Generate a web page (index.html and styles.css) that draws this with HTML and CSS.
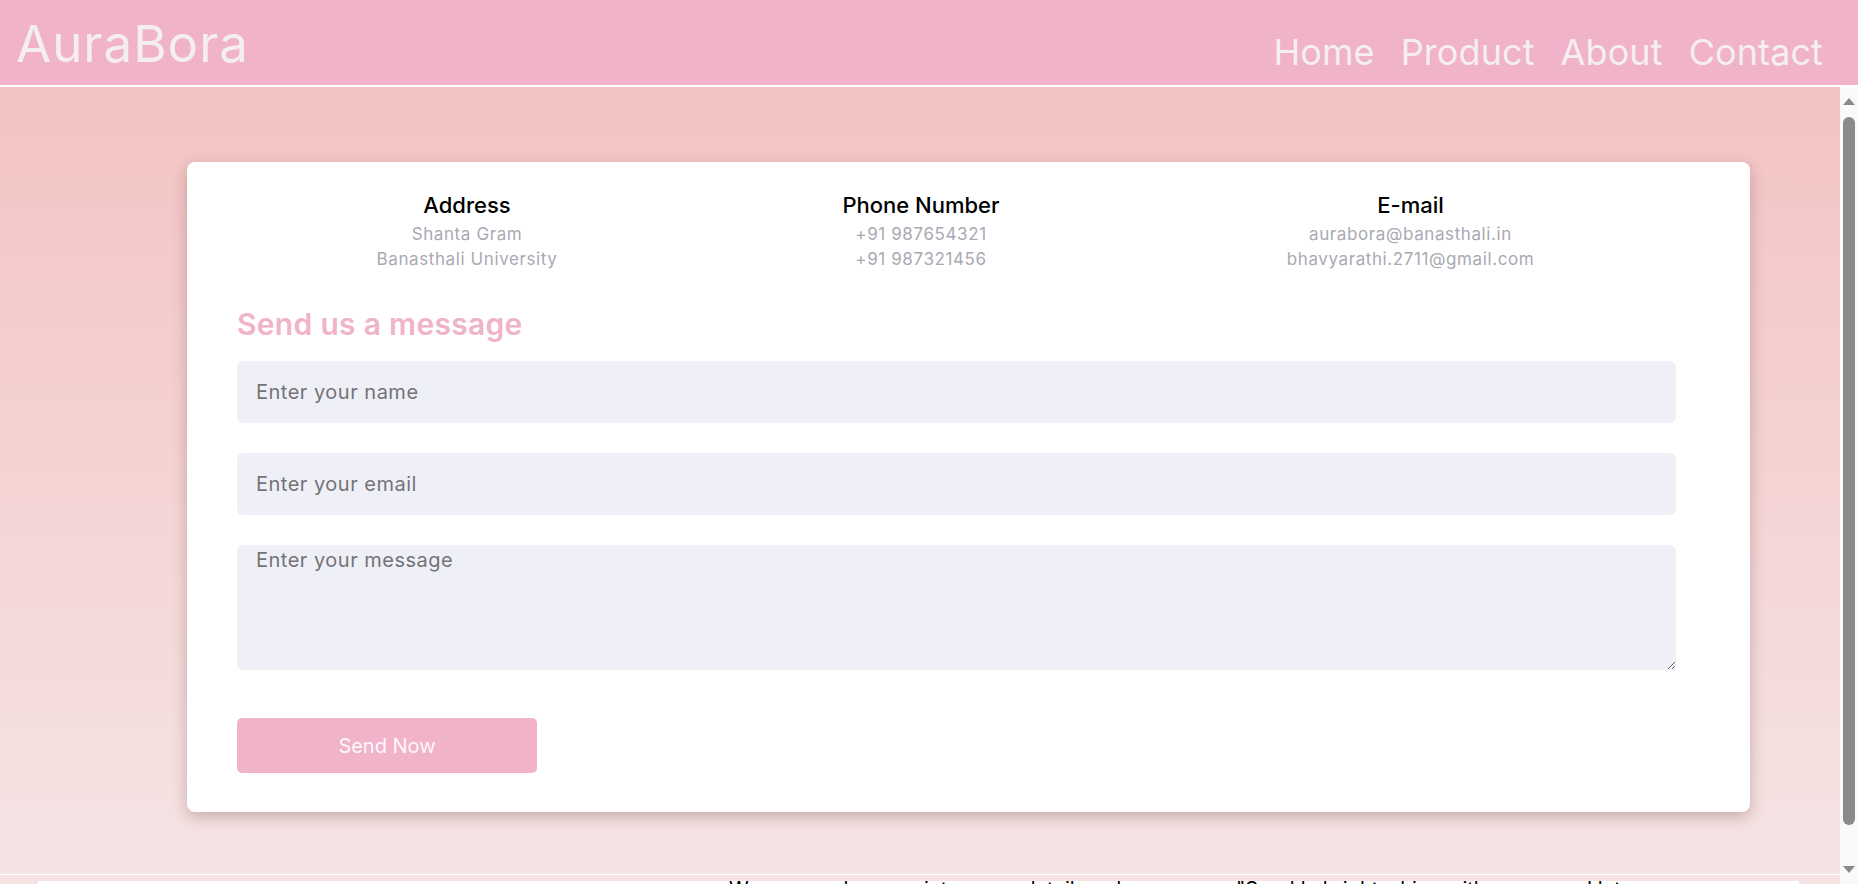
FILE: index.html
```html
<!DOCTYPE html>
<html lang="en">
<head>
<meta charset="utf-8">
<title>AuraBora - Contact</title>
<link rel="stylesheet" href="styles.css">
</head>
<body>
<header class="site-header">
  <div class="logo">AuraBora</div>
  <nav class="nav">
    <a href="#">Home</a>
    <a href="#">Product</a>
    <a href="#">About</a>
    <a href="#">Contact</a>
  </nav>
</header>
<div class="viewport">
  <main class="page">
    <section class="contact">
      <div class="card">
        <div class="info">
          <div class="info-item">
            <h3>Address</h3>
            <p>Shanta Gram</p>
            <p>Banasthali University</p>
          </div>
          <div class="info-item">
            <h3>Phone Number</h3>
            <p>+91 987654321</p>
            <p>+91 987321456</p>
          </div>
          <div class="info-item">
            <h3>E-mail</h3>
            <p>aurabora@banasthali.in</p>
            <p>bhavyarathi.2711@gmail.com</p>
          </div>
        </div>
        <h2 class="form-title">Send us a message</h2>
        <form class="form">
          <input class="field" type="text" placeholder="Enter your name">
          <input class="field" type="email" placeholder="Enter your email">
          <textarea class="field area" placeholder="Enter your message"></textarea>
          <button class="send" type="button">Send Now</button>
        </form>
      </div>
    </section>
    <section class="about">
      <div class="about-inner">
        <p>We weave elegance into every detail, and</p>
        <p>"Sparkle bright, shine with grace, and let</p>
      </div>
    </section>
  </main>
  <div class="vscroll" aria-hidden="true">
    <span class="arrow up"></span>
    <span class="thumb"></span>
    <span class="arrow down"></span>
  </div>
</div>
</body>
</html>
```
FILE: styles.css
```css
* { box-sizing: border-box; }

html, body {
  margin: 0;
  height: 100%;
  overflow: hidden;
}

body {
  font-family: Inter, "Liberation Sans", sans-serif;
  background: #f5e3e3;
}

.site-header {
  height: 87px;
  background: #f0b3ca;
  border-bottom: 2px solid #ffffff;
  display: flex;
  justify-content: space-between;
  align-items: flex-start;
  padding: 0 35px 0 16px;
}

.logo {
  font-size: 51px;
  line-height: 60px;
  margin-top: 14px;
  color: #f4eeee;
  font-weight: 400;
  letter-spacing: 1px;
}

.nav {
  display: flex;
  gap: 26px;
  margin-top: 31px;
}

.nav a {
  font-size: 36px;
  line-height: 42px;
  letter-spacing: 0.1px;
  color: #f5efef;
  text-decoration: none;
}

.viewport {
  display: flex;
  height: calc(100vh - 87px);
}

.page {
  flex: 1;
  overflow: hidden;
}

.vscroll {
  width: 18px;
  flex-shrink: 0;
  background: #f9f9f9;
  display: flex;
  flex-direction: column;
  align-items: center;
}

.arrow {
  width: 0;
  height: 0;
  border-left: 6px solid transparent;
  border-right: 6px solid transparent;
}

.arrow.up {
  margin-top: 11px;
  border-bottom: 7px solid #8a8a8a;
}

.arrow.down {
  margin-top: auto;
  margin-bottom: 11px;
  border-top: 7px solid #8a8a8a;
}

.thumb {
  width: 12px;
  height: 708px;
  margin-top: 12px;
  background: #8a8a8a;
  border-radius: 6px;
}

.contact {
  height: 788px;
  background: linear-gradient(to bottom, #f4c3c3 0%, #f5e4e4 100%);
  border-bottom: 1px solid #ffffff;
  padding-top: 75px;
}

.card {
  width: 1563px;
  margin-left: 187px;
  background: #ffffff;
  border-radius: 8px;
  box-shadow: 0 5px 15px rgba(90, 40, 40, 0.28);
  padding: 26px 74px 39px 50px;
}

.info {
  display: grid;
  grid-template-columns: 460px 448px 1fr;
  text-align: center;
}

.info-item h3 {
  margin: 0;
  font-size: 22px;
  line-height: 34px;
  font-weight: 500;
  color: #000000;
}

.info-item p {
  margin: 0;
  font-size: 17px;
  line-height: 25px;
  letter-spacing: 0.6px;
  color: #a9a9b3;
}

.form-title {
  margin: 32px 0 17px;
  font-size: 30px;
  line-height: 40px;
  letter-spacing: 0.3px;
  font-weight: 600;
  color: #f0b3ca;
}

.form {
  display: flex;
  flex-direction: column;
  gap: 30px;
}

.field {
  height: 62px;
  border: none;
  outline: none;
  border-radius: 6px;
  background: #efeff7;
  padding: 0 19px;
  font-family: Inter, "Liberation Sans", sans-serif;
  font-size: 20px;
  letter-spacing: 0.5px;
  color: #333333;
}

.field::placeholder {
  color: #747378;
}

.area {
  height: 125px;
  padding: 3px 19px;
  line-height: 24px;
}

.send {
  align-self: flex-start;
  margin-top: 18px;
  width: 300px;
  height: 55px;
  border: none;
  border-radius: 5px;
  background: #f0b3ca;
  color: #fff8fb;
  font-family: Inter, "Liberation Sans", sans-serif;
  font-size: 20px;
}

.about {
  background: #f5e3e3;
  padding: 6px 41px 60px 38px;
}

.about-inner {
  background: #ffffff;
  display: grid;
  grid-template-columns: 507px 1fr;
  padding-left: 691px;
}

.about-inner p {
  margin: 0;
  font-size: 20px;
  line-height: 16px;
  color: #000000;
  padding-bottom: 40px;
}
```
